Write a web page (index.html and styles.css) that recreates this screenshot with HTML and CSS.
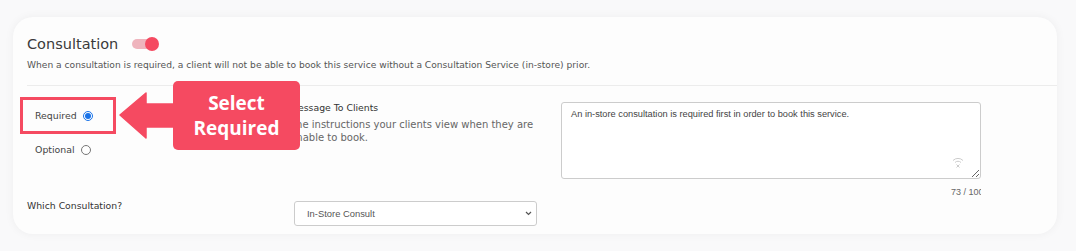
FILE: index.html
```html
<!DOCTYPE html>
<html lang="en">
<head>
    <meta charset="UTF-8">
    <meta name="viewport" content="width=device-width, initial-scale=1.0">
    <title>Consultation</title>
    <link rel="stylesheet" href="styles.css">
</head>
<body>

<div class="card">
    <div class="card-head">
        <div class="title-row">
            <h2>Consultation</h2>
            <span class="toggle"><span class="knob"></span></span>
        </div>
        <p class="hint">When a consultation is required, a client will not be able to book this service without a Consultation Service (in-store) prior.</p>
    </div>

    <div class="card-body">
        <div class="radios">
            <label class="radio">Required <input type="radio" name="req" checked></label>
            <label class="radio">Optional <input type="radio" name="req"></label>
        </div>
        <div class="msg-info">
            <div class="label">Message To Clients</div>
            <div class="sub">The instructions your clients view when they are unable to book.</div>
        </div>
        <div class="msg-field">
            <div class="area-wrap">
                <textarea>An in-store consultation is required first in order to book this service.</textarea>
                <svg class="area-icon" width="12" height="12" viewBox="0 0 12 12">
                    <path d="M1 4.5 A7 7 0 0 1 11 4.5 M3 6.5 A4.2 4.2 0 0 1 9 6.5" fill="none" stroke="#ccc" stroke-width="1"/>
                    <path d="M4.5 8.5 L7.5 11.5 M7.5 8.5 L4.5 11.5" stroke="#ccc" stroke-width="1"/>
                </svg>
            </div>
            <div class="counter">73 / 100</div>
        </div>

        <div class="label which">Which Consultation?</div>
        <div class="select-cell">
            <select>
                <option>In-Store Consult</option>
            </select>
            <svg class="chevron" width="7" height="5" viewBox="0 0 7 5">
                <path d="M1 1 L3.5 3.5 L6 1" fill="none" stroke="#555" stroke-width="1.2"/>
            </svg>
        </div>
    </div>
</div>

<!-- annotation overlay -->
<div class="mark-box"></div>
<svg class="mark-arrow" width="56" height="48" viewBox="0 0 56 48">
    <polygon points="1,23 27,1 27,12 56,12 56,35 27,35 27,46" fill="#f54a61" stroke="#f54a61" stroke-width="1.5" stroke-linejoin="round"/>
</svg>
<div class="callout">Select<br>Required</div>

</body>
</html>
```

FILE: styles.css
```css
body {
    margin: 0;
    padding: 17px 19px 17px 13px;
    background-color: #f9f9fa;
    font-family: "DejaVu Sans", "Open Sans", sans-serif;
    color: #333;
    position: relative;
}
.card {
    height: 217px;
    box-sizing: border-box;
    background-color: #fdfdfd;
    border-radius: 20px;
    box-shadow: 0 0 10px rgba(0, 0, 0, 0.05);
    overflow: hidden;
}
.card-head {
    margin-left: 14px;
    padding-top: 19px;
    padding-bottom: 15px;
    border-bottom: 1px solid #ececec;
}
.title-row {
    display: flex;
    align-items: center;
    gap: 14px;
}
h2 {
    margin: 0;
    font-size: 14.5px;
    font-weight: 500;
    color: #3a3a3a;
}
.toggle {
    position: relative;
    width: 19px;
    height: 10px;
    border-radius: 5px;
    background-color: #efb4bd;
}
.knob {
    position: absolute;
    left: 13px;
    top: -2px;
    width: 14px;
    height: 14px;
    border-radius: 50%;
    background-color: #f54a61;
}
.hint {
    margin: 8px 0 0;
    font-size: 9.15px;
    color: #555;
}
.card-body {
    display: grid;
    grid-template-columns: 263px 271px 420px;
    margin-left: 14px;
    padding-top: 12px;
}
.radios {
    display: flex;
    flex-direction: column;
    gap: 23px;
    padding: 12px 0 0 8px;
}
.radio {
    display: flex;
    align-items: center;
    gap: 6px;
    font-size: 9.4px;
    color: #444;
}
.radio input {
    width: 10px;
    height: 10px;
    margin: 0;
    accent-color: #1a73e8;
}
.label {
    font-size: 9.3px;
    font-weight: 500;
    color: #333;
}
.msg-info {
    padding-top: 4px;
}
.sub {
    margin-top: 5px;
    width: 252px;
    font-size: 10px;
    line-height: 13px;
    color: #666;
}
.msg-field {
    display: flex;
    flex-direction: column;
    align-items: stretch;
    margin-top: 4px;
}
.area-wrap {
    position: relative;
}
textarea {
    display: block;
    width: 100%;
    height: 77px;
    box-sizing: border-box;
    padding: 6px 9px;
    border: 1px solid #ccc;
    border-radius: 3px;
    background: #fff;
    font-family: "Liberation Sans", Arial, sans-serif;
    font-size: 9.25px;
    color: #444;
    resize: vertical;
}
.area-icon {
    position: absolute;
    right: 17px;
    bottom: 11px;
}
.counter {
    height: 13px;
    margin-top: 8px;
    padding-left: 390px;
    overflow: hidden;
    white-space: nowrap;
    font-family: "Liberation Sans", Arial, sans-serif;
    font-size: 9px;
    color: #666;
}
.which {
    padding-top: 0;
}
.select-cell {
    position: relative;
    padding-left: 4px;
    margin-top: 1px;
}
select {
    appearance: none;
    width: 243px;
    height: 25px;
    padding: 0 12px;
    border: 1px solid #ccc;
    border-radius: 3px;
    background: #fff;
    font-family: "Liberation Sans", Arial, sans-serif;
    font-size: 9.4px;
    color: #555;
}
.chevron {
    position: absolute;
    left: 235px;
    top: 10px;
}
.mark-box {
    position: absolute;
    left: 20px;
    top: 97px;
    width: 90px;
    height: 31px;
    border: 3px solid #f54a61;
}
.mark-arrow {
    position: absolute;
    left: 119px;
    top: 92px;
}
.callout {
    position: absolute;
    left: 173px;
    top: 81px;
    width: 127px;
    height: 69px;
    box-sizing: border-box;
    padding-top: 10px;
    border-radius: 5px;
    background-color: #f54a61;
    color: #fff;
    text-align: center;
    font-family: "Open Sans", sans-serif;
    font-weight: 700;
    font-size: 19px;
    line-height: 25px;
}
```
